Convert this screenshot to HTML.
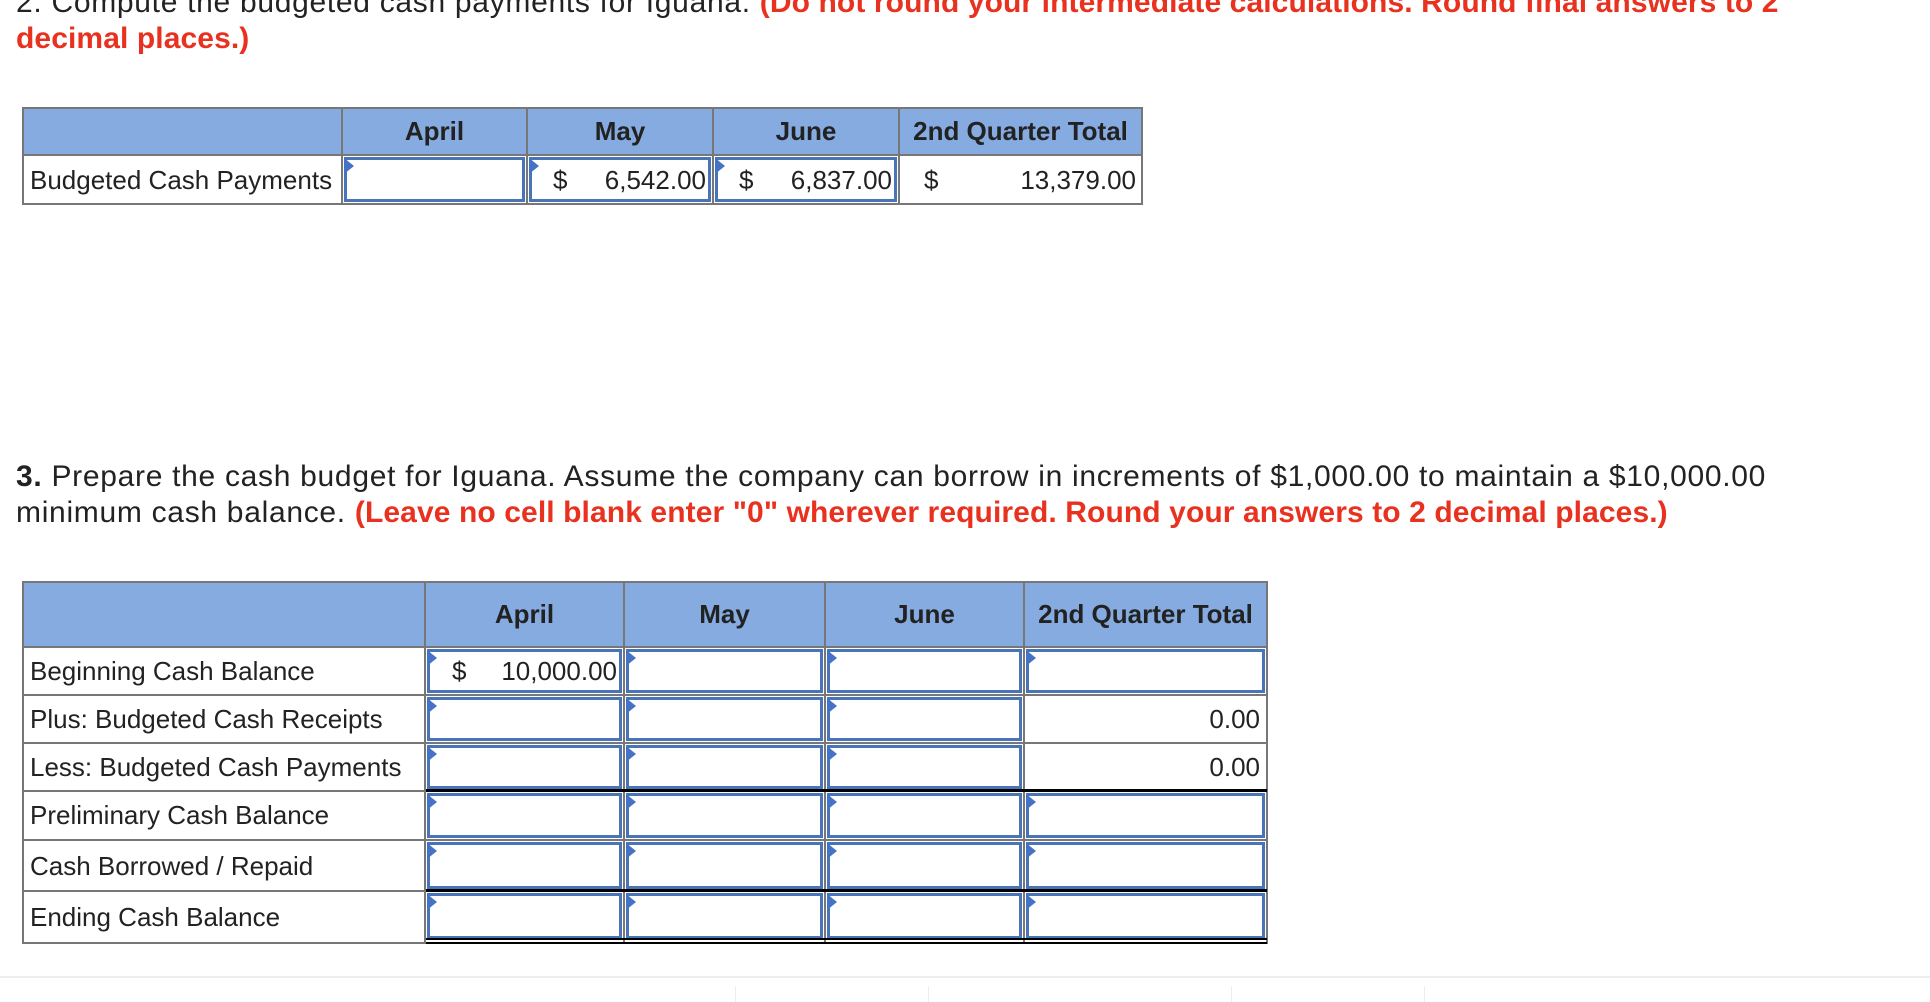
<!DOCTYPE html>
<html><head><meta charset="utf-8"><style>
*{margin:0;padding:0;box-sizing:border-box}
body{width:1930px;height:1002px;overflow:hidden;background:#fff;font-family:"Liberation Sans",Arial,sans-serif;color:#222;position:relative}
.t{position:absolute;left:16px;font-size:30px;line-height:36px;white-space:nowrap;letter-spacing:0.7px}
.r{color:#e8311f;font-weight:bold;letter-spacing:0.1px}
.a{position:absolute}
.g{position:absolute;background:#777}
.hd{position:absolute;background:#85abe0}
.ht{position:absolute;font-size:26px;font-weight:bold;text-align:center;color:#222}
.lbl{position:absolute;font-size:26px;padding-left:8px;white-space:nowrap}
.in{position:absolute;border:3px solid #4a74b8;background:#fff}
.in::before{content:"";position:absolute;left:-3px;top:-2px;border-left:10px solid #4472c4;border-top:8px solid transparent;border-bottom:8px solid transparent}
.v{position:absolute;font-size:26px;white-space:nowrap}
.k{position:absolute;background:#000}
</style></head><body>

<div class="t" style="top:-15px">2. Compute the budgeted cash payments for Iguana. <span class="r">(Do not round your intermediate calculations. Round final answers to 2</span></div>
<div class="t" style="top:21px"><span class="r">decimal places.)</span></div>

<div class="hd" style="left:22px;top:107px;width:1120px;height:48px"></div>
<div class="g" style="left:22px;top:107px;width:1120px;height:2px"></div>
<div class="g" style="left:22px;top:154px;width:1120px;height:2px"></div>
<div class="g" style="left:22px;top:203px;width:1120px;height:2px"></div>
<div class="g" style="left:22px;top:107px;width:2px;height:98px"></div>
<div class="g" style="left:341px;top:107px;width:2px;height:98px"></div>
<div class="g" style="left:526px;top:107px;width:2px;height:98px"></div>
<div class="g" style="left:712px;top:107px;width:2px;height:98px"></div>
<div class="g" style="left:898px;top:107px;width:2px;height:98px"></div>
<div class="g" style="left:1141px;top:107px;width:2px;height:98px"></div>
<div class="ht" style="left:343px;top:116px;width:183px">April</div>
<div class="ht" style="left:528px;top:116px;width:184px">May</div>
<div class="ht" style="left:714px;top:116px;width:184px">June</div>
<div class="ht" style="left:900px;top:116px;width:241px">2nd Quarter Total</div>
<div class="lbl" style="left:22px;top:165px">Budgeted Cash Payments</div>
<div class="in" style="left:344px;top:157px;width:181px;height:45px"></div>
<div class="in" style="left:529px;top:157px;width:182px;height:45px"></div>
<div class="in" style="left:715px;top:157px;width:182px;height:45px"></div>
<div class="v" style="left:553px;top:165px">$</div>
<div class="v" style="left:550px;top:165px;width:156px;text-align:right">6,542.00</div>
<div class="v" style="left:739px;top:165px">$</div>
<div class="v" style="left:736px;top:165px;width:156px;text-align:right">6,837.00</div>
<div class="v" style="left:924px;top:165px">$</div>
<div class="v" style="left:920px;top:165px;width:216px;text-align:right">13,379.00</div>

<div class="t" style="top:459px"><b>3.</b> Prepare the cash budget for Iguana. Assume the company can borrow in increments of $1,000.00 to maintain a $10,000.00</div>
<div class="t" style="top:495px">minimum cash balance. <span class="r">(Leave no cell blank enter "0" wherever required. Round your answers to 2 decimal places.)</span></div>

<div class="hd" style="left:22px;top:581px;width:1245px;height:66px"></div>
<div class="g" style="left:22px;top:581px;width:1245px;height:2px"></div>
<div class="g" style="left:22px;top:646px;width:1245px;height:2px"></div>
<div class="g" style="left:22px;top:694px;width:1245px;height:2px"></div>
<div class="g" style="left:22px;top:742px;width:1245px;height:2px"></div>
<div class="g" style="left:22px;top:790px;width:1245px;height:2px"></div>
<div class="g" style="left:22px;top:839px;width:1245px;height:2px"></div>
<div class="g" style="left:22px;top:890px;width:1245px;height:2px"></div>
<div class="g" style="left:22px;top:942px;width:404px;height:2px"></div>
<div class="g" style="left:22px;top:581px;width:2px;height:363px"></div>
<div class="g" style="left:424px;top:581px;width:2px;height:363px"></div>
<div class="g" style="left:623px;top:581px;width:2px;height:363px"></div>
<div class="g" style="left:824px;top:581px;width:2px;height:363px"></div>
<div class="g" style="left:1023px;top:581px;width:2px;height:363px"></div>
<div class="g" style="left:1266px;top:581px;width:2px;height:363px"></div>
<div class="ht" style="left:426px;top:599px;width:197px">April</div>
<div class="ht" style="left:625px;top:599px;width:199px">May</div>
<div class="ht" style="left:826px;top:599px;width:197px">June</div>
<div class="ht" style="left:1025px;top:599px;width:241px">2nd Quarter Total</div>

<div class="lbl" style="left:22px;top:656px">Beginning Cash Balance</div>
<div class="lbl" style="left:22px;top:704px">Plus: Budgeted Cash Receipts</div>
<div class="lbl" style="left:22px;top:752px">Less: Budgeted Cash Payments</div>
<div class="lbl" style="left:22px;top:800px">Preliminary Cash Balance</div>
<div class="lbl" style="left:22px;top:851px">Cash Borrowed / Repaid</div>
<div class="lbl" style="left:22px;top:902px">Ending Cash Balance</div>

<div class="in" style="left:427px;top:649px;width:195px;height:44px"></div>
<div class="in" style="left:626px;top:649px;width:197px;height:44px"></div>
<div class="in" style="left:827px;top:649px;width:195px;height:44px"></div>
<div class="in" style="left:1026px;top:649px;width:239px;height:44px"></div>
<div class="v" style="left:452px;top:656px">$</div>
<div class="v" style="left:440px;top:656px;width:177px;text-align:right">10,000.00</div>
<div class="in" style="left:427px;top:697px;width:195px;height:44px"></div>
<div class="in" style="left:626px;top:697px;width:197px;height:44px"></div>
<div class="in" style="left:827px;top:697px;width:195px;height:44px"></div>
<div class="v" style="left:1030px;top:704px;width:230px;text-align:right">0.00</div>
<div class="in" style="left:427px;top:745px;width:195px;height:44px"></div>
<div class="in" style="left:626px;top:745px;width:197px;height:44px"></div>
<div class="in" style="left:827px;top:745px;width:195px;height:44px"></div>
<div class="v" style="left:1030px;top:752px;width:230px;text-align:right">0.00</div>
<div class="k" style="left:426px;top:789px;width:841px;height:3px"></div>
<div class="in" style="left:427px;top:793px;width:195px;height:45px"></div>
<div class="in" style="left:626px;top:793px;width:197px;height:45px"></div>
<div class="in" style="left:827px;top:793px;width:195px;height:45px"></div>
<div class="in" style="left:1026px;top:793px;width:239px;height:45px"></div>
<div class="in" style="left:427px;top:842px;width:195px;height:47px"></div>
<div class="in" style="left:626px;top:842px;width:197px;height:47px"></div>
<div class="in" style="left:827px;top:842px;width:195px;height:47px"></div>
<div class="in" style="left:1026px;top:842px;width:239px;height:47px"></div>
<div class="k" style="left:426px;top:889px;width:841px;height:3px"></div>
<div class="in" style="left:427px;top:893px;width:195px;height:46px"></div>
<div class="in" style="left:626px;top:893px;width:197px;height:46px"></div>
<div class="in" style="left:827px;top:893px;width:195px;height:46px"></div>
<div class="in" style="left:1026px;top:893px;width:239px;height:46px"></div>
<div class="k" style="left:426px;top:938px;width:841px;height:2px"></div>
<div class="k" style="left:426px;top:942px;width:841px;height:2px"></div>

<div class="a" style="left:0;top:976px;width:1930px;height:2px;background:#eee"></div>
<div class="a" style="left:735px;top:986px;width:1px;height:16px;background:#eee"></div>
<div class="a" style="left:928px;top:986px;width:1px;height:16px;background:#eee"></div>
<div class="a" style="left:1231px;top:986px;width:1px;height:16px;background:#eee"></div>
<div class="a" style="left:1424px;top:986px;width:1px;height:16px;background:#eee"></div>
</body></html>
